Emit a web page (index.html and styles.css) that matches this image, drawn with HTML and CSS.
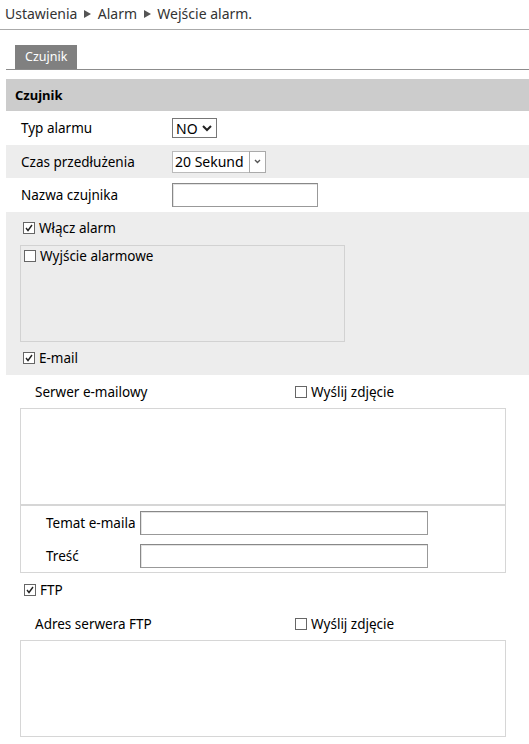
FILE: index.html
```html
<!DOCTYPE html>
<html lang="pl">
  <head>
    <meta charset="UTF-8" />
    <meta name="viewport" content="width=device-width, initial-scale=1.0" />
    <title>Wejście alarm.</title>
    <link rel="stylesheet" href="styles.css">
  </head>
  <body>
    <div class="crumb">
      Ustawienia <span class="crumb-arrow"></span> Alarm <span class="crumb-arrow"></span> Wejście alarm.
    </div>

    <div class="page">
      <div class="tabs">
        <span class="tab">Czujnik</span>
      </div>

      <div class="section-title">Czujnik</div>

      <div class="row">
        <label class="row-label">Typ alarmu</label>
        <div class="select-no">
          NO
          <svg width="10" height="7" viewBox="0 0 10 7"><polyline points="1,1 5,5 9,1" fill="none" stroke="#222" stroke-width="2" /></svg>
        </div>
      </div>

      <div class="row row-gray">
        <label class="row-label">Czas przedłużenia</label>
        <div class="select-time">
          <span class="select-value">20 Sekund</span>
          <span class="select-button">
            <svg width="7" height="5" viewBox="0 0 7 5"><polyline points="1,1 3.5,3.5 6,1" fill="none" stroke="#555" stroke-width="1.4" /></svg>
          </span>
        </div>
      </div>

      <div class="row">
        <label class="row-label" for="name">Nazwa czujnika</label>
        <input class="text-input name-input" type="text" id="name" />
      </div>

      <div class="link-block">
        <label class="check-line"><input type="checkbox" checked /> Włącz alarm</label>
        <div class="output-box">
          <label class="check-line"><input type="checkbox" /> Wyjście alarmowe</label>
        </div>
        <label class="check-line"><input type="checkbox" checked /> E-mail</label>
      </div>

      <div class="sub-head">
        <span class="sub-title">Serwer e-mailowy</span>
        <label class="check-line send-photo"><input type="checkbox" /> Wyślij zdjęcie</label>
      </div>
      <div class="list-box"></div>
      <div class="mail-box">
        <div class="mail-row">
          <label class="mail-label" for="subject">Temat e-maila</label>
          <input class="text-input mail-input" type="text" id="subject" />
        </div>
        <div class="mail-row">
          <label class="mail-label" for="body">Treść</label>
          <input class="text-input mail-input" type="text" id="body" />
        </div>
      </div>

      <label class="check-line ftp-line"><input type="checkbox" checked /> FTP</label>

      <div class="sub-head sub-head-ftp">
        <span class="sub-title">Adres serwera FTP</span>
        <label class="check-line send-photo"><input type="checkbox" /> Wyślij zdjęcie</label>
      </div>
      <div class="list-box"></div>
    </div>
  </body>
</html>
```

FILE: styles.css
```css
body {
  margin: 0;
  font-family: "Noto Sans", "Open Sans", Arial, sans-serif;
  font-size: 13.5px;
  color: #000;
  background-color: #fff;
}

.crumb {
  height: 29px;
  line-height: 27px;
  padding-left: 5px;
  font-size: 14px;
  color: #333;
  border-bottom: 1px solid #aaa;
}

.crumb-arrow {
  display: inline-block;
  width: 0;
  height: 0;
  margin: 0 3px 1px 3px;
  border-top: 4px solid transparent;
  border-bottom: 4px solid transparent;
  border-left: 7px solid #555;
}

.page {
  padding-left: 6px;
}

.tabs {
  margin-top: 15px;
  padding-left: 9px;
  height: 24px;
  border-bottom: 1px solid #8c8c8c;
}

.tab {
  display: inline-block;
  height: 24px;
  line-height: 24px;
  padding: 0 10px;
  font-size: 12.5px;
  color: #fff;
  background-color: #808080;
}

.section-title {
  margin-top: 9px;
  height: 32px;
  line-height: 32px;
  padding-left: 9px;
  font-size: 13px;
  font-weight: bold;
  background-color: #ccc;
}

.row {
  display: flex;
  align-items: center;
  height: 34px;
  padding-left: 15px;
}

.row-gray {
  height: 33px;
  background-color: #ededed;
}

.row-label {
  width: 151px;
}

.select-no {
  display: flex;
  align-items: center;
  gap: 4px;
  height: 18px;
  padding: 0 4px 0 3px;
  border: 1px solid #777;
  background-color: #fff;
  font-size: 14px;
}

.select-time {
  display: flex;
  height: 22px;
}

.select-value {
  width: 74px;
  height: 20px;
  line-height: 20px;
  padding-left: 2px;
  font-size: 14px;
  border: 1px solid #bbb;
  border-right: none;
  background-color: #fff;
}

.select-button {
  display: flex;
  align-items: center;
  justify-content: center;
  width: 15px;
  height: 20px;
  border: 1px solid #aaa;
  background-color: #fff;
}

.text-input {
  box-sizing: border-box;
  margin: 0;
  padding: 0 3px;
  height: 24px;
  font: inherit;
  border: 1px solid #999;
  border-top-color: #888;
  border-left-color: #888;
  box-shadow: inset 1px 1px 0 #e3e3e3;
  background-color: #fff;
}

.name-input {
  width: 146px;
}

.link-block {
  padding: 6px 0 7px 17px;
  background-color: #ededed;
}

.check-line {
  display: flex;
  align-items: center;
  height: 20px;
}

.check-line input {
  appearance: none;
  -webkit-appearance: none;
  width: 12px;
  height: 12px;
  margin: 0 4px 0 0;
  border: 1px solid #666;
  background-color: #fff;
}

.check-line input:checked {
  background-image: url("data:image/svg+xml,%3Csvg xmlns='http://www.w3.org/2000/svg' width='10' height='10' viewBox='0 0 10 10'%3E%3Cpolyline points='2,5 4,7.5 8,2' fill='none' stroke='%23222' stroke-width='1.4'/%3E%3C/svg%3E");
  background-position: center;
  background-repeat: no-repeat;
}

.output-box {
  box-sizing: border-box;
  width: 325px;
  height: 97px;
  margin: 7px 0 6px -3px;
  padding: 0 0 0 3px;
  border: 1px solid #d2d2d2;
  background-color: #ececec;
}

.sub-head {
  display: flex;
  align-items: center;
  height: 33px;
  padding-left: 29px;
}

.sub-head-ftp {
  margin-top: 7px;
}

.sub-title {
  width: 260px;
}

.list-box {
  box-sizing: border-box;
  width: 486px;
  height: 97px;
  margin-left: 14px;
  border: 1px solid #d6d6d6;
}

.mail-box {
  box-sizing: border-box;
  width: 486px;
  height: 68px;
  margin-left: 14px;
  padding: 5px 0 0 25px;
  border: 1px solid #d6d6d6;
}

.mail-row {
  display: flex;
  align-items: center;
  margin-bottom: 9px;
}

.mail-label {
  width: 94px;
}

.mail-input {
  width: 288px;
}

.ftp-line {
  margin: 7px 0 0 18px;
}
```
